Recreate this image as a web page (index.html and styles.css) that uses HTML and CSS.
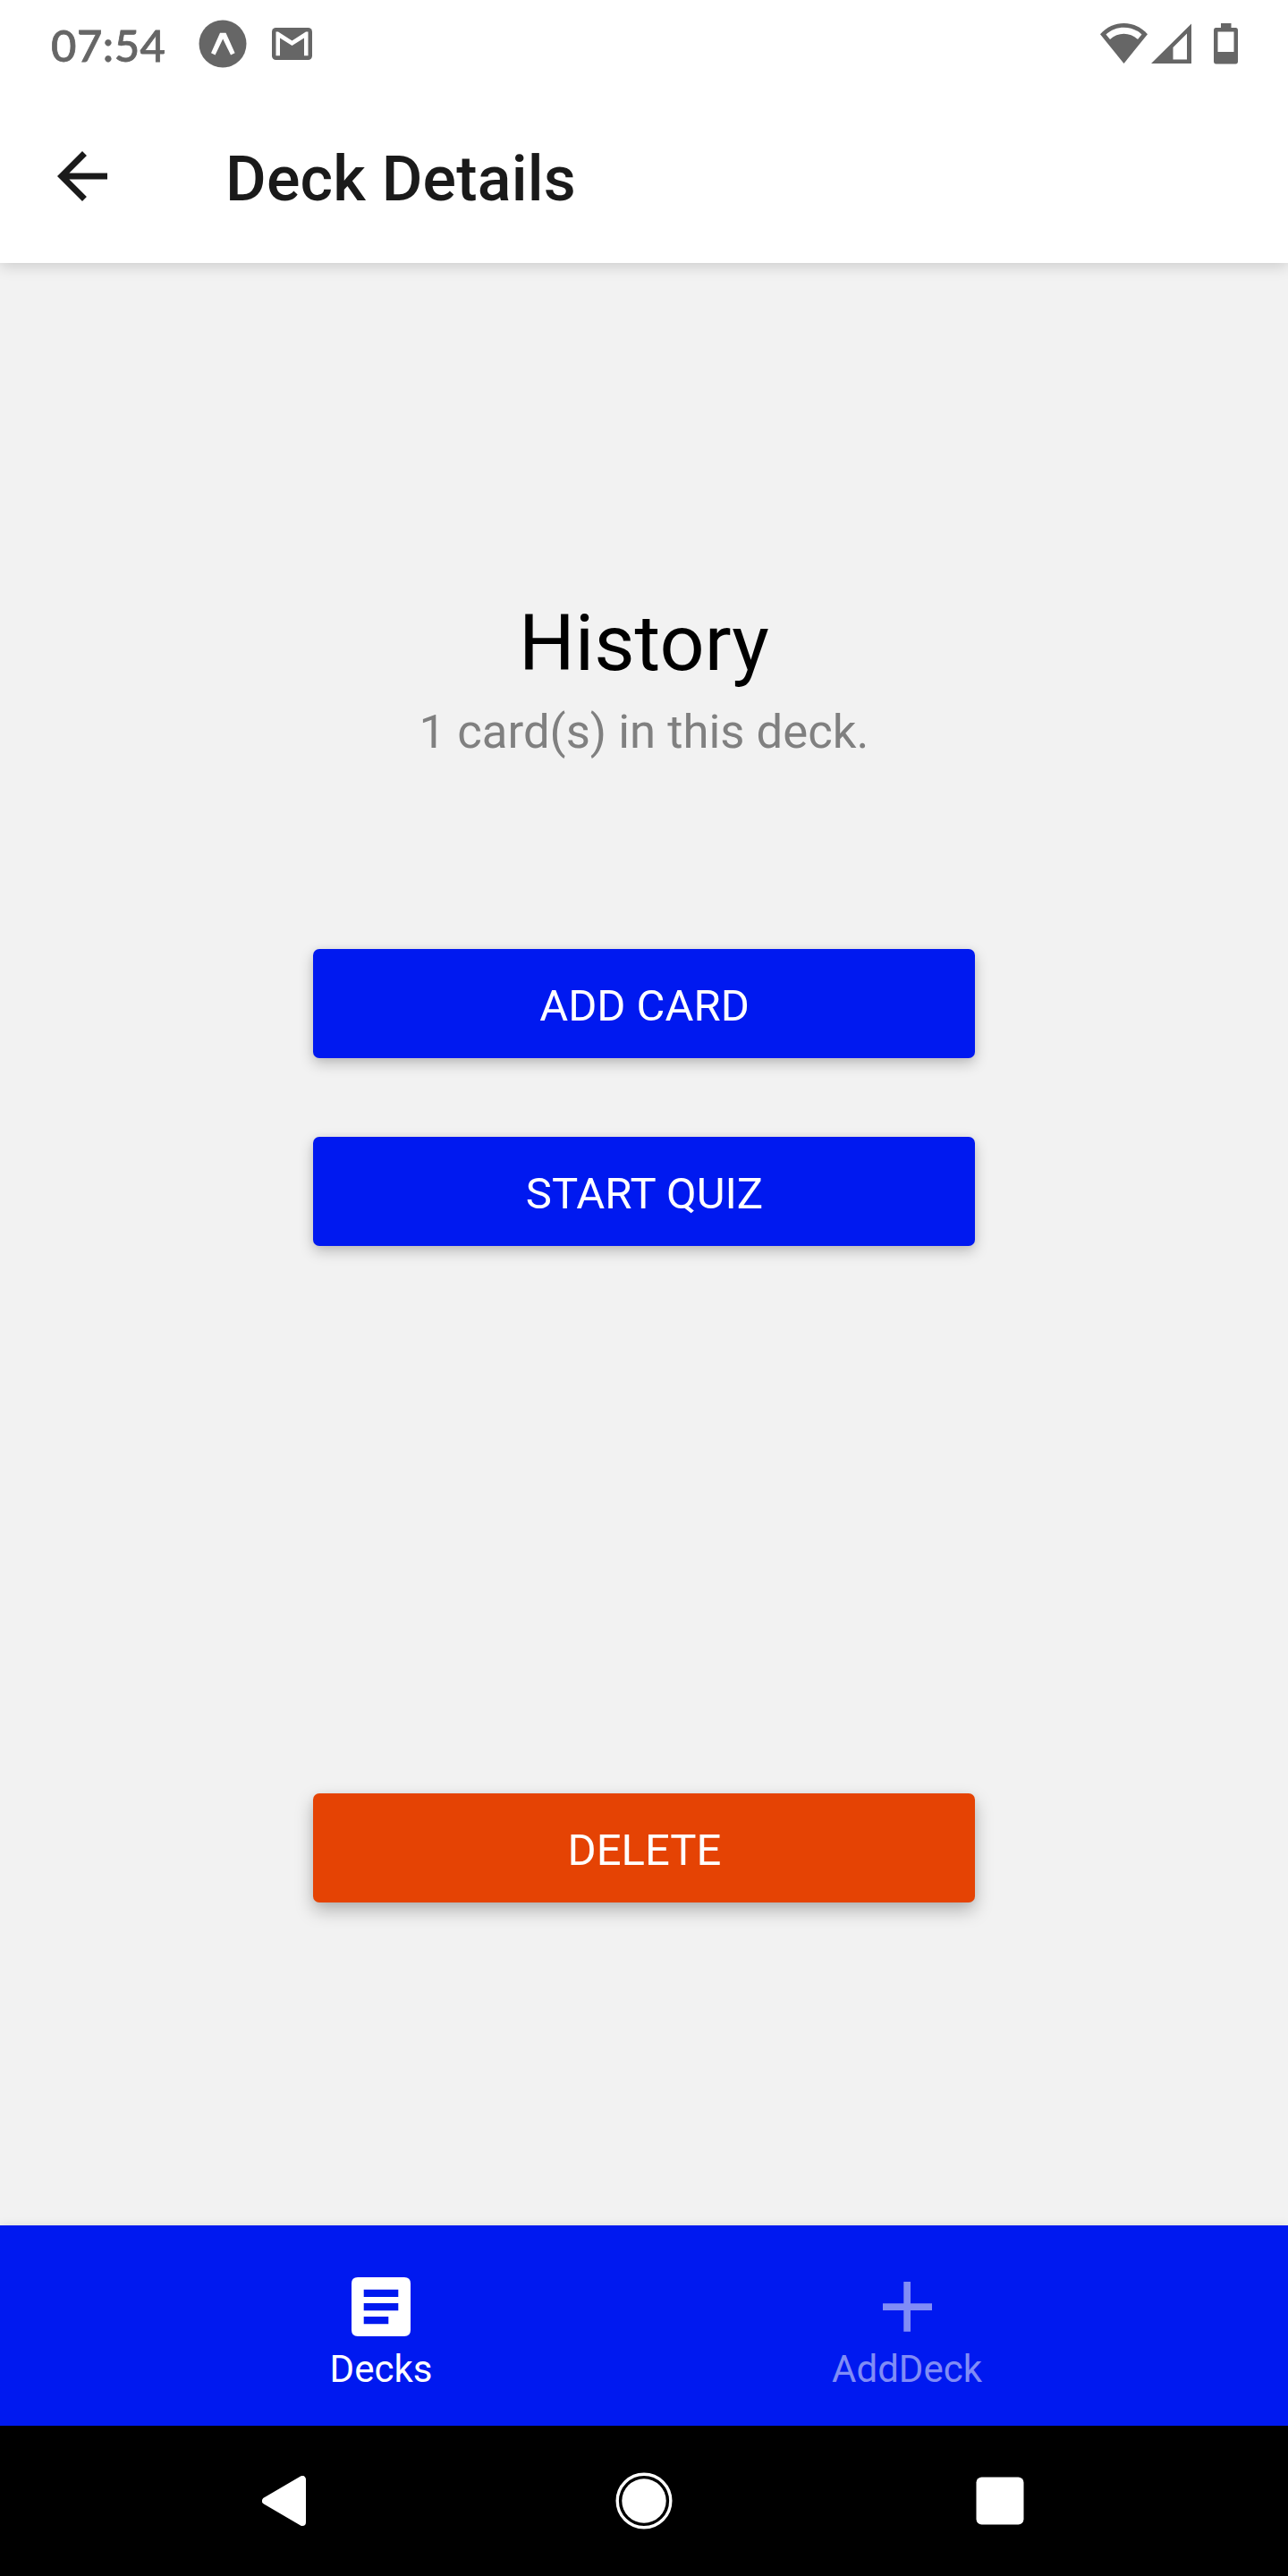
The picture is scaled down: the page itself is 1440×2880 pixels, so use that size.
FILE: index.html
```html
<!DOCTYPE html>
<html lang="en">
<head>
<meta charset="utf-8">
<title>Deck Details</title>
<link rel="stylesheet" href="styles.css">
</head>
<body>
<div class="screen">
  <header class="top">
    <div class="status">
      <span class="time">07:54</span>
      <svg class="expo" width="54" height="54" viewBox="0 0 54 54"><circle cx="27" cy="27" r="26.500" fill="#666"/><path d="M24 14.700h6.500L40.600 37.200 36 39.500 27.200 21.500 18.600 39.500 14 37.200Z" fill="#fff"/></svg>
      <svg class="mail" width="45" height="36" viewBox="0 0 45 36"><rect width="45" height="36" rx="4.500" fill="#666"/><path d="M4.500 4.500h2.500L22.500 14.500 38 4.500h2.500V31.300h-4.500V11.500L22.500 20 9 11.500V31.300H4.500Z" fill="#fff"/></svg>
      <svg class="wifi" width="54" height="46" viewBox="0 0 54 46"><path d="M0 12.300C14-4.100 39-4.100 53 12.300L26.500 45Z" fill="#666"/><path d="M6.500 12.500C17.500 2 35.500 2 46.500 12.500L42 18C33 9.500 20 9.500 11 18Z" fill="#fff"/></svg>
      <svg class="signal" width="46" height="46" viewBox="0 0 46 46"><path fill-rule="evenodd" d="M0 45 45 .5V45ZM24.500 27V40.500H40V11.500Z" fill="#666"/></svg>
      <svg class="battery" width="27" height="46" viewBox="0 0 27 46"><path fill-rule="evenodd" d="M8 0H19.500V5H24.500Q27 5 27 8V42.500Q27 45.500 24.500 45.500H2.500Q0 45.500 0 42.500V8Q0 5 2.500 5H8ZM4.500 9.500V32H22.500V9.500Z" fill="#666"/></svg>
    </div>
    <div class="appbar">
      <svg class="back" width="84" height="84" viewBox="0 0 24 24"><path d="M20 11H7.830l5.590-5.590L12 4l-8 8 8 8 1.410-1.410L7.830 13H20z" fill="#1a1a1a"/></svg>
      <h1 class="title">Deck Details</h1>
    </div>
  </header>
  <main class="content">
    <h2 class="deck">History</h2>
    <p class="count">1 card(s) in this deck.</p>
    <button class="btn add">ADD CARD</button>
    <button class="btn quiz">START QUIZ</button>
    <button class="btn delete">DELETE</button>
  </main>
  <nav class="tabs">
    <a class="tab">
      <svg width="66" height="66" viewBox="0 0 66 66"><path fill-rule="evenodd" d="M7 0H59Q66 0 66 7V59Q66 66 59 66H7Q0 66 0 59V7Q0 0 7 0ZM13.700 13.700V22H52.300V13.700ZM13.700 29V37.200H52.300V29ZM13.700 44V52.200H41.300V44Z" fill="#fff"/></svg>
      <span>Decks</span>
    </a>
    <a class="tab inactive">
      <svg width="66" height="66" viewBox="0 0 66 66"><path d="M29.300 5H37V29.200H61V37H37V60.700H29.300V37H6V29.200H29.300Z" fill="#808cf6"/></svg>
      <span>AddDeck</span>
    </a>
  </nav>
  <footer class="system">
    <svg class="nav-back" width="50" height="56" viewBox="0 0 50 56"><path d="M4 28 45 4V52Z" fill="#fff" stroke="#fff" stroke-width="8" stroke-linejoin="round"/></svg>
    <svg width="64" height="64" viewBox="0 0 64 64"><circle cx="32" cy="32" r="29.800" fill="none" stroke="#fff" stroke-width="3.400"/><circle cx="32" cy="32" r="24.700" fill="#fff"/></svg>
    <svg class="nav-recent" width="54" height="54" viewBox="0 0 54 54"><rect x=".5" y=".5" width="53" height="53" rx="6" fill="#fff"/></svg>
  </footer>
</div>
</body>
</html>
```
FILE: styles.css
```css
* { box-sizing: border-box; }
body { margin: 0; font-family: Roboto, sans-serif; background: #f2f2f2; }
h1, h2, p { margin: 0; font-weight: 400; }
svg { display: block; flex: none; }
.screen { width: 1440px; height: 2880px; display: flex; flex-direction: column; overflow: hidden; }
.top { height: 294px; flex: none; background: #fff; box-shadow: 0 3px 16px rgba(0,0,0,.17); }
.status { height: 84px; display: flex; align-items: flex-start; padding: 0 56px; }
.time { width: 166px; padding: 20px 0 0 1px; font: 500 49px/60px Lato, sans-serif; letter-spacing: .5px; -webkit-text-stroke: .8px #666; color: #666; white-space: nowrap; }
.expo { margin-top: 22px; }
.mail { margin: 31px 0 0 28px; }
.wifi { margin: 26px 0 0 auto; }
.signal { margin: 26px 0 0 3px; }
.battery { margin: 26px 0 0 24px; }
.appbar { height: 210px; display: flex; align-items: flex-start; padding-left: 50px; }
.back { margin-top: 71px; }
.title { margin: 75px 0 0 118px; font-size: 70px; line-height: 82px; letter-spacing: .2px; font-weight: 500; color: #1a1a1a; }
.content { flex: 1; display: flex; flex-direction: column; align-items: center; padding-top: 373px; }
.deck { font-size: 88px; line-height: 104px; color: #000; }
.count { margin-top: 15px; font-size: 52.7px; line-height: 64px; color: #808080; }
.btn { width: 740px; height: 122px; flex: none; padding: 5px 0 0 1px; border: 0; border-radius: 7px; background: #0019f0; color: #fff; font: 400 49px/58px Roboto, sans-serif; box-shadow: 0 6px 16px rgba(0,0,0,.22), 0 1px 8px rgba(0,0,0,.06); }
.add { margin-top: 211px; }
.quiz { margin-top: 88px; }
.delete { margin-top: 612px; background: #e54304; box-shadow: 0 9px 20px rgba(0,0,0,.26), 0 1px 8px rgba(0,0,0,.06); }
.tabs { height: 224px; flex: none; display: flex; justify-content: center; padding: 58px 0 0; background: #0019f0; box-shadow: 0 0 10px rgba(0,0,0,.1); }
.tab { width: 588px; display: flex; flex-direction: column; align-items: center; color: #fff; font-size: 42px; line-height: 50px; }
.tab span { margin-top: 12px; }
.inactive { color: #808cf6; }
.system { height: 168px; flex: none; display: grid; grid-template-columns: 1fr 64px 1fr; align-items: center; background: #000; }
.nav-back { margin-left: 293px; }
.nav-recent { justify-self: end; margin-right: 295px; }
```
